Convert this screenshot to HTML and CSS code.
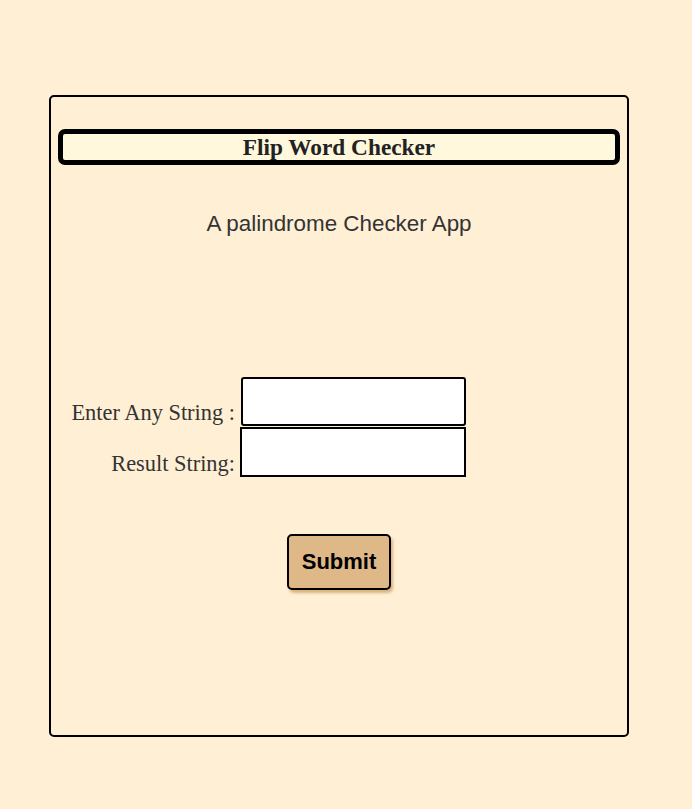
FILE: index.html
```html
<!DOCTYPE html>
<html lang="en">
<head>
<meta charset="utf-8">
<title>Flip Word Checker</title>
<link rel="stylesheet" href="styles.css">
</head>
<body>
  <main class="card">
    <h1 class="title">Flip Word Checker</h1>
    <p class="subtitle">A palindrome Checker App</p>
    <form class="form">
      <label class="label" for="text-input">Enter Any String :</label>
      <input class="field field-first" id="text-input" type="text">
      <label class="label" for="result">Result String:</label>
      <input class="field field-second" id="result" type="text" readonly>
    </form>
    <div class="actions">
      <button class="submit" type="button">Submit</button>
    </div>
  </main>
</body>
</html>
```

FILE: styles.css
```css
html, body {
  margin: 0;
  padding: 0;
}

body {
  background: #FFEFD5;
  padding-top: 95px;
  min-height: 809px;
  box-sizing: border-box;
}

.card {
  margin-left: 49px;
  width: 580px;
  height: 642px;
  box-sizing: border-box;
  border: 2px solid #000;
  border-radius: 5px;
  padding: 32px 7px 0;
  display: flex;
  flex-direction: column;
}

.title {
  margin: 0;
  height: 36px;
  box-sizing: border-box;
  border: 5px solid #000;
  border-radius: 7px;
  background: #FFF8DC;
  font-family: "Liberation Serif", "Times New Roman", serif;
  font-weight: bold;
  font-size: 23.3px;
  line-height: 27px;
  text-align: center;
  color: #222;
}

.subtitle {
  margin: 46px 0 0;
  font-family: "Liberation Sans", Arial, sans-serif;
  font-size: 22.4px;
  line-height: 25px;
  text-align: center;
  color: #333;
}

.form {
  margin: 141px 0 0 13px;
  display: grid;
  grid-template-columns: 164px 226px;
  column-gap: 5px;
  align-items: end;
}

.label {
  font-family: "Liberation Serif", "Times New Roman", serif;
  font-size: 22.4px;
  color: #333;
  text-align: right;
  white-space: nowrap;
}

.field {
  box-sizing: border-box;
  width: 226px;
  height: 50px;
  margin: 0;
  background: #fff;
  border: 2px solid #000;
  font-size: 18px;
  text-align: center;
}

.field-first {
  height: 49px;
  border-radius: 3px;
  margin-left: 1px;
  width: 225px;
}

.field-second {
  border-radius: 0;
  margin-top: 1px;
}

.actions {
  margin-top: 57px;
  display: flex;
  justify-content: center;
}

.submit {
  box-sizing: border-box;
  height: 56px;
  padding: 0 13px;
  background: #DEB887;
  border: 2px solid #000;
  border-radius: 5px;
  font-family: "Liberation Sans", Arial, sans-serif;
  font-weight: bold;
  font-size: 22px;
  line-height: 26px;
  color: #000;
  box-shadow: 2px 3px 3px #d9b47f;
  cursor: pointer;
}
```
